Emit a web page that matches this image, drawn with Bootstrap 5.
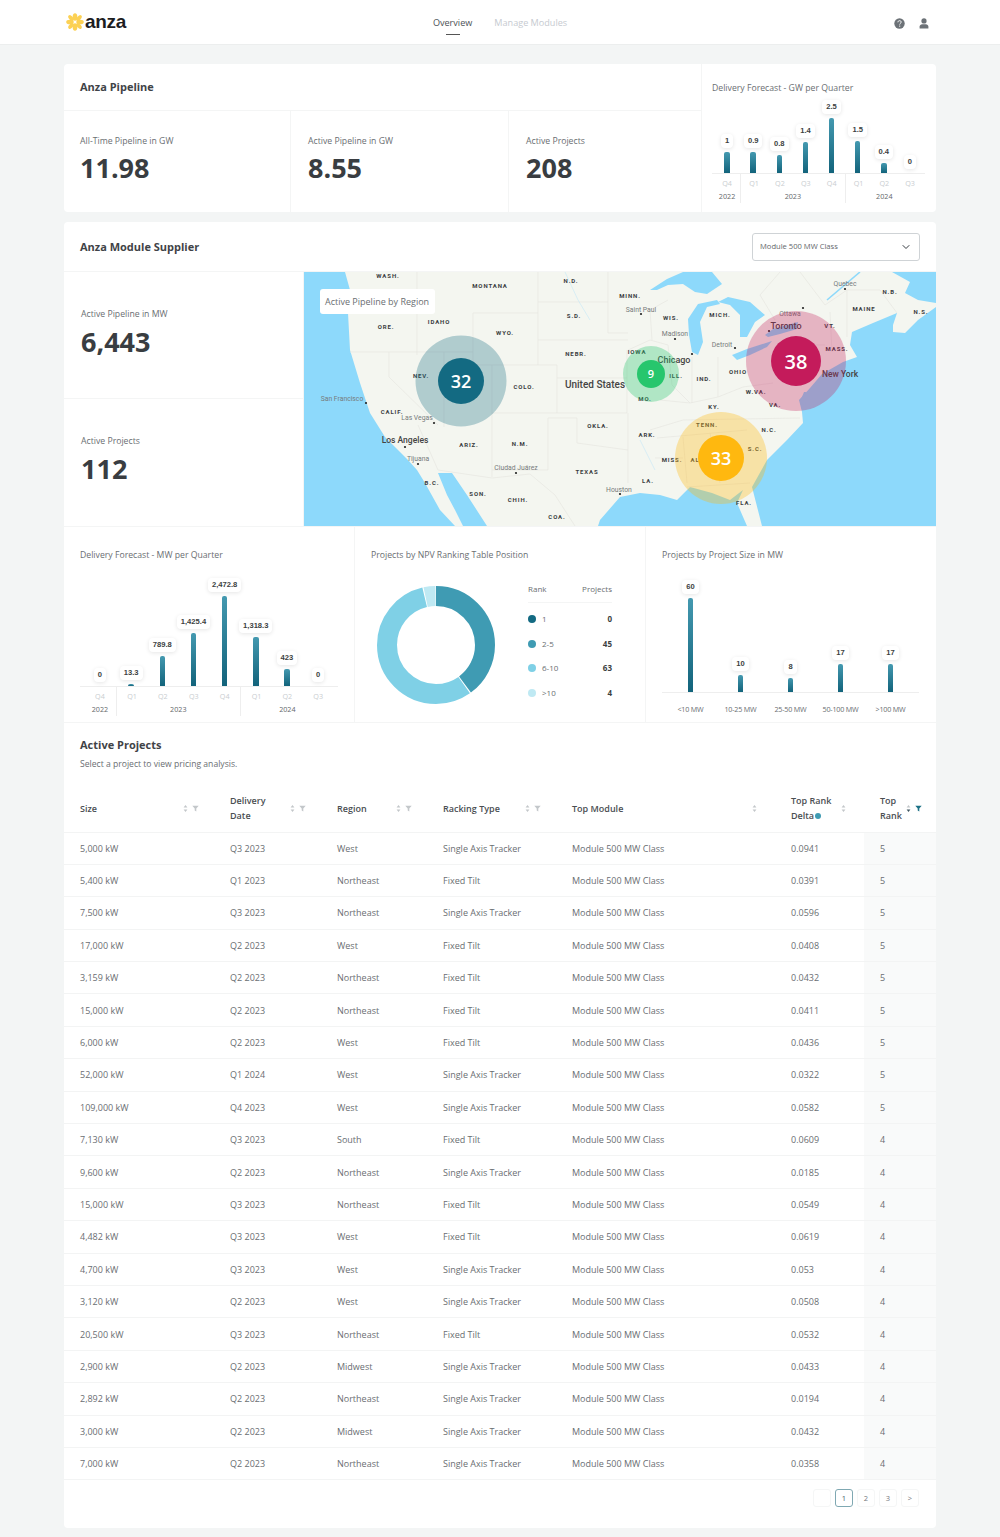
<!DOCTYPE html>
<html lang="en"><head><meta charset="utf-8"><title>Anza</title>
<link href="https://cdn.jsdelivr.net/npm/bootstrap@5.3.0/dist/css/bootstrap.min.css" rel="stylesheet">
<style>
body{background:#f3f5f5;font-family:"Open Sans",sans-serif;font-size:9px;color:#6a6e72;line-height:14px}
.top-bar{height:45px;background:#fff;border-bottom:1px solid #eceeee;padding:2px 64px 0}
.top-side{flex:1 1 0}
.logo-word{font-family:"Liberation Sans",sans-serif;font-weight:700;font-size:19px;color:#1d1d1f;letter-spacing:-.3px;line-height:20px}
.logo-mark{margin:0 1px 0 2px}
.tab-row{gap:22px}
.tab-active,.tab-muted{font-size:9.1px;text-decoration:none;position:relative}
.tab-active{color:#4c5257}.tab-muted{color:#c6cad0}
.tab-active::after{content:"";position:absolute;left:13px;width:14px;bottom:-5px;height:1.5px;background:#555}
.top-icons{gap:14px;margin-right:7px}
.page-wrap{padding:19px 64px 10px}
.panel{background:#fff;border-radius:4px;overflow:hidden;border:0}
.panel+.panel{margin-top:10px}
.h-title{font-size:11px;font-weight:700;color:#3f4347;line-height:14px}
.pipe-left{width:637px}
.pipe-head{height:47px;padding:16px 16px 0;border-bottom:1px solid #f4f5f5}
.stat-cell{padding:23px 16px 0;height:101px;border-right:1px solid #f4f5f5;font-size:8.7px}
.stat-a{width:227px}.stat-b{width:218px}.stat-c{width:192px}
.stat-b,.stat-c{padding-left:17px}
.stat-val{font-size:27px;font-weight:700;color:#393d41;line-height:34px;margin-top:3px}
.pipe-right{width:235px;border-left:1px solid #f4f5f5;padding:17px 11px 0 10px}
.chart-name{font-size:8.7px;color:#6a6e72;line-height:14px}
.plot{display:flex;align-items:flex-end;border-bottom:1px solid #eeeeee;padding:0 2px}
.plot-wide{padding:0 4.4px}
.plot-five{padding:0 3.5px}
.plot-col{flex:1 1 0;display:flex;flex-direction:column;align-items:center;justify-content:flex-end;min-width:0}
.val-pill{font-family:"Liberation Sans",sans-serif;font-weight:700;font-size:7.6px;line-height:14px;height:14px;padding:0 4px;color:#3c3f42;background:#fff;border-radius:4px;box-shadow:0 1px 4px rgba(0,0,0,.1);margin-bottom:4.5px;white-space:nowrap}
.val-bar{width:5.5px;border-radius:2px 2px 0 0;background:linear-gradient(#4499b0,#12637b)}
.axis{display:flex;padding:0 2px}
.axis-wide{padding:0 4.4px}
.yr-group{border-left:1px solid #eeeeee;text-align:center;padding-top:3px}
.yr-group:first-child{border-left:0}
.yr-1{width:12.5%}.yr-4{width:50%}.yr-3{width:37.5%}
.q-row{display:flex;color:#c9cdd0;font-size:7.2px;line-height:13px}
.q-row span{flex:1 1 0}
.yr-lbl{font-size:7.2px;line-height:13px;color:#63676b}
.sup-head{height:50px;padding:0 16px;border-bottom:1px solid #f4f5f5}
.mod-select{width:168px;height:28px;font-size:7.6px;padding:0 7px;color:#63676b;border:1px solid #cfd3d6;border-radius:3px;background-position:right 8px center;background-size:10px 8px}
.sup-left{width:240px;border-right:1px solid #f4f5f5}
.sup-stat{height:127px;padding:35px 17px 0;border-bottom:1px solid #f4f5f5;font-size:8.7px}
.sup-stat:last-child{border-bottom:0}
.sup-stat .stat-val{margin-top:4px}
.map-box{position:relative;width:632px;height:254px;overflow:hidden}
.map-box svg{display:block}
.map-tag{position:absolute;left:16px;top:17px;width:115px;height:25px;background:#fff;border-radius:3px;font-size:9px;line-height:25px;padding-left:5px;color:#6a6e72}
.lb{font-family:Roboto,sans-serif;font-weight:700;font-size:6px;letter-spacing:.9px;fill:#3a3d3f;text-anchor:middle}
.ct{font-family:Roboto,sans-serif;font-size:6.8px;fill:#777b7c;text-anchor:middle}
.cb{font-family:Roboto,sans-serif;font-size:9px;font-weight:500;fill:#444;text-anchor:middle}
.nm{font-family:"Open Sans",sans-serif;font-weight:600;fill:#fff;text-anchor:middle}
.ln{fill:none;stroke:#e6e7e1;stroke-width:.7}
.tri-row{height:197px;border-top:1px solid #f4f5f5;border-bottom:1px solid #f4f5f5}
.tri-a{width:291px;padding:21px 16px 0;border-right:1px solid #f4f5f5}
.tri-b{width:291px;padding:21px 17px 0 16px;border-right:1px solid #f4f5f5}
.tri-c{width:290px;padding:21px 17px 0 16px}
.donut-box{margin:24px 0 0 6px;width:118px;height:118px}
.legend-box{width:84px;margin:20px 0 0 33px}
.legend-head{display:flex;justify-content:space-between;font-size:8px;height:21px;line-height:14px;border-bottom:1px solid #f4f5f5;color:#6a6e72}
.legend-row{display:flex;align-items:center;height:24.6px;font-size:8px}
.legend-row:nth-child(2){margin-top:4px}
.legend-dot{width:8px;height:8px;border-radius:50%;margin-right:6px}
.legend-row b{margin-left:auto;color:#3c3f42;font-weight:700}
.size-axis{display:flex;padding:0 3.5px;font-size:7.2px;color:#6a6e72;margin-top:9px;text-align:center;letter-spacing:-.2px}
.size-axis span{flex:1 1 0}
.tbl-head{padding:15px 16px 0;height:62px}
.tbl-sub{margin-top:5px;font-size:8.6px}
.table.proj{table-layout:fixed;width:872px;margin:0;--bs-table-color:#6a6e72;--bs-table-border-color:#f3f4f4;--bs-table-bg:transparent;font-size:9px;line-height:15px}
.proj th{height:47px;padding:0 15px 0 16px;vertical-align:middle;font-weight:600;color:#4a4e52}
.proj td{height:32.4px;padding:0 0 0 16px;vertical-align:middle;color:#6a6e72}
.proj td:last-child,.proj th:last-child{background:#f9fafa}
.proj thead th:last-child{background:#fff;padding-right:14px}
.th-in{display:flex;align-items:center}
.th-in>span:first-child{margin-right:auto}
.th-sort{padding-right:3px}
.ico{display:block;margin-left:4px;flex:none}
.info-dot{display:inline-block;width:6px;height:6px;border-radius:50%;background:#3f9bb3;margin-left:1px;vertical-align:0}
.pg-wrap{padding:9px 17px 21px 0}
.pg-wrap .pagination{margin:0;gap:4px;--bs-pagination-font-size:7.5px;--bs-pagination-border-color:#f5f6f6;--bs-pagination-color:#73777b;--bs-pagination-border-radius:3px}
.pg-wrap .page-link{width:18px;height:18px;padding:0;line-height:16px;text-align:center;border-radius:3px!important;margin:0!important;background:#fff}
.pg-wrap .page-item.active .page-link{border-color:#7fa8b2;color:#476069;background:#fff}
</style></head><body>
<svg width="0" height="0" class="position-absolute"><defs>
<symbol id="srt" viewBox="0 0 5 9"><path d="M2.5 1 4.4 3.6H.6zM2.5 8 .6 5.4h3.8z" fill="#c3c7ca"/></symbol>
<symbol id="srt-on" viewBox="0 0 5 9"><path d="M2.5 1 4.4 3.6H.6z" fill="#c3c7ca"/><path d="M2.5 8 .6 5.4h3.8z" fill="#3f5560"/></symbol>
<symbol id="flt" viewBox="0 0 7 7"><path d="M.3.8h6.4L4.3 3.6v2.8L2.7 5.5V3.6z" fill="#c3c7ca"/></symbol>
<symbol id="flt-on" viewBox="0 0 7 7"><path d="M.3.8h6.4L4.3 3.6v2.8L2.7 5.5V3.6z" fill="#1c7186"/></symbol>
</defs></svg>

<nav class="top-bar d-flex align-items-center">
  <div class="top-side">
    <a href="#" class="d-inline-flex align-items-center text-decoration-none">
      <svg class="logo-mark" width="18" height="18" viewBox="-10 -10 20 20"><g fill="#fcd154">
        <ellipse cx="0" cy="-5.6" rx="2.6" ry="4.2"/><ellipse cx="0" cy="5.6" rx="2.6" ry="4.2"/>
        <ellipse cx="-5.6" cy="0" rx="4.2" ry="2.6"/><ellipse cx="5.6" cy="0" rx="4.2" ry="2.6"/>
        <ellipse cx="-4.4" cy="-4.4" rx="3.8" ry="2.2" transform="rotate(45 -4.4 -4.4)"/>
        <ellipse cx="4.4" cy="4.4" rx="3.8" ry="2.2" transform="rotate(45 4.4 4.4)"/>
        <ellipse cx="4.4" cy="-4.4" rx="3.8" ry="2.2" transform="rotate(-45 4.4 -4.4)"/>
        <ellipse cx="-4.4" cy="4.4" rx="3.8" ry="2.2" transform="rotate(-45 -4.4 4.4)"/>
      </g></svg>
      <span class="logo-word">anza</span>
    </a>
  </div>
  <div class="d-flex tab-row">
    <a href="#" class="tab-active">Overview</a><a href="#" class="tab-muted">Manage Modules</a>
  </div>
  <div class="top-side d-flex justify-content-end">
    <div class="d-flex align-items-center top-icons">
      <svg width="11" height="11" viewBox="0 0 11 11"><circle cx="5.5" cy="5.5" r="5.2" fill="#6c7277"/><path d="M3.9 4.3c0-1 .7-1.6 1.7-1.6s1.6.6 1.6 1.4c0 1.2-1.5 1.2-1.5 2.4" fill="none" stroke="#fff" stroke-width="1"/><circle cx="5.7" cy="8.1" r=".65" fill="#fff"/></svg>
      <svg width="10" height="11" viewBox="0 0 10 11"><circle cx="5" cy="2.9" r="2.6" fill="#6c7277"/><path d="M.6 10.4V8.6c0-1.5 1.2-2.4 2.6-2.4h3.6c1.4 0 2.6.9 2.6 2.4v1.8z" fill="#6c7277"/></svg>
    </div>
  </div>
</nav>

<main class="page-wrap">
  <section class="panel d-flex">
    <div class="pipe-left">
      <div class="pipe-head h-title">Anza Pipeline</div>
      <div class="d-flex">
        <div class="stat-cell stat-a">All-Time Pipeline in GW<div class="stat-val">11.98</div></div>
        <div class="stat-cell stat-b">Active Pipeline in GW<div class="stat-val">8.55</div></div>
        <div class="stat-cell stat-c border-0">Active Projects<div class="stat-val">208</div></div>
      </div>
    </div>
    <div class="pipe-right">
      <div class="chart-name">Delivery Forecast - GW per Quarter</div>
      <div class="plot" style="height:79px">
        <div class="plot-col"><div class="val-pill">1</div><div class="val-bar" style="height:21px"></div></div>
        <div class="plot-col"><div class="val-pill">0.9</div><div class="val-bar" style="height:21px"></div></div>
        <div class="plot-col"><div class="val-pill">0.8</div><div class="val-bar" style="height:18px"></div></div>
        <div class="plot-col"><div class="val-pill">1.4</div><div class="val-bar" style="height:31px"></div></div>
        <div class="plot-col"><div class="val-pill">2.5</div><div class="val-bar" style="height:55px"></div></div>
        <div class="plot-col"><div class="val-pill">1.5</div><div class="val-bar" style="height:32px"></div></div>
        <div class="plot-col"><div class="val-pill">0.4</div><div class="val-bar" style="height:10px"></div></div>
        <div class="plot-col"><div class="val-pill">0</div><div class="val-bar" style="height:0"></div></div>
      </div>
      <div class="axis">
        <div class="yr-group yr-1"><div class="q-row"><span>Q4</span></div><div class="yr-lbl">2022</div></div>
        <div class="yr-group yr-4"><div class="q-row"><span>Q1</span><span>Q2</span><span>Q3</span><span>Q4</span></div><div class="yr-lbl">2023</div></div>
        <div class="yr-group yr-3"><div class="q-row"><span>Q1</span><span>Q2</span><span>Q3</span></div><div class="yr-lbl">2024</div></div>
      </div>
    </div>
  </section>

  <section class="panel">
    <div class="sup-head d-flex align-items-center justify-content-between">
      <div class="h-title">Anza Module Supplier</div>
      <select class="form-select mod-select"><option>Module 500 MW Class</option></select>
    </div>
    <div class="d-flex">
      <div class="sup-left">
        <div class="sup-stat">Active Pipeline in MW<div class="stat-val">6,443</div></div>
        <div class="sup-stat">Active Projects<div class="stat-val">112</div></div>
      </div>
      <div class="map-box">
        <svg width="633" height="254" viewBox="304 272 633 254">
          <rect x="304" y="272" width="633" height="254" fill="#8dd9fb"/>
          <path fill="#f4f6f0" d="M345 272L892 272 910 282 905 293 918 300 936 303 936 307 918 320 905 333 893 332 893 325 897 313 873 323 852 332 850 345 857 357 843 362 822 374 810 388 799 400 802 412 803 423 787 440 767 460 752 487 762 526 747 526 737 503 743 490 730 500 712 493 690 487 677 500 660 495 640 493 620 497 600 520 598 526 455 526 440 510 425 483 417 470 408 460 385 437 370 413 360 383 350 350 348 313 350 290Z"/>
          <g class="ln-g">
            <path class="ln" d="M417 272V355M350 352H473M389 352V377L438 425M444 352V427M492 365V477M473 313H538V365M473 313V365H557M557 365V413M492 413H627M548 418V470H492M538 272V313M538 302H608M538 340H628M608 272V333M557 378H627M627 350V413M548 418H577V443L628 450M628 413V483M692 357V403M718 357V397M660 400 690 403 718 397 743 387 773 383M650 430 683 420 800 418M657 438 747 430M683 437 687 483M710 433 720 483M687 487 750 483M655 458H683M847 337V290H880L897 313M776 370H820M790 345H825M830 312 832 352M418 425 438 470 492 478 530 474 555 495 575 526M628 350 650 340 668 345 672 385 690 403M608 333H628M668 300 650 310 652 340M780 272 760 295 775 320M800 272 825 305 847 290"/>
            <path d="M827 300 860 272" fill="none" stroke="#8dd9fb" stroke-width="1.6"/>
            <path d="M565 272 578 300 590 320M640 440 655 470" fill="none" stroke="#c5e8f6" stroke-width=".6"/>
          </g>
          <g fill="#8dd9fb">
            <path d="M438 473 452 473 467 495 487 526 463 526 455 510 447 495Z"/>
            <path d="M650 290 667 279 683 272 712 272 722 284 707 294 695 292 683 284 668 285 657 290Z"/>
            <path d="M688 319 698 304 717 300 720 304 707 307 700 322 703 342 698 355 692 352 689 335Z"/>
            <path d="M718 302 728 297 750 302 765 315 755 322 747 337 740 337 740 315 730 305Z"/>
            <path d="M732 355 747 349 772 341 767 347 750 355 737 360Z"/>
            <path d="M765 335 773 329 798 322 797 329 780 334 768 337Z"/>
            <path d="M800 402 804 392 806 392 805 405Z"/>
          </g>
          <g fill="#222">
            <circle cx="366" cy="403" r="1.1"/><circle cx="434" cy="423" r="1.1"/><circle cx="405" cy="447" r="1.1"/><circle cx="418" cy="464" r="1.1"/><circle cx="516" cy="473" r="1.1"/><circle cx="620" cy="494" r="1.1"/><circle cx="641" cy="314" r="1.1"/><circle cx="675" cy="339" r="1.1"/><circle cx="692" cy="354" r="1.1"/><circle cx="735" cy="348" r="1.1"/><circle cx="769" cy="331" r="1.1"/><circle cx="803" cy="308" r="1.1"/><circle cx="845" cy="289" r="1.1"/>
          </g>
          <g>
            <text class="lb" x="388" y="277.5">WASH.</text><text class="lb" x="490" y="288">MONTANA</text><text class="lb" x="571" y="283">N.D.</text><text class="lb" x="630" y="298">MINN.</text><text class="ct" x="641" y="312">Saint Paul</text><text class="lb" x="574" y="318">S.D.</text><text class="lb" x="671" y="320">WIS.</text><text class="lb" x="720" y="317">MICH.</text><text class="ct" x="790" y="316">Ottawa</text><text class="ct" x="845" y="286">Quebec</text><text class="lb" x="890" y="294">N.B.</text><text class="lb" x="864" y="311">MAINE</text><text class="lb" x="921" y="314">N.S.</text><text class="lb" x="830" y="328">VT.</text><text class="cb" x="786" y="329">Toronto</text><text class="lb" x="439" y="324">IDAHO</text><text class="lb" x="386" y="329">ORE.</text><text class="lb" x="505" y="335">WYO.</text><text class="ct" x="675" y="336">Madison</text><text class="ct" x="722" y="347">Detroit</text><text class="lb" x="837" y="351">MASS.</text><text class="lb" x="637" y="354">IOWA</text><text class="lb" x="576" y="356">NEBR.</text><text class="cb" x="674" y="363">Chicago</text><text class="lb" x="676" y="378">ILL.</text><text class="lb" x="738" y="374">OHIO</text><text class="lb" x="704" y="381">IND.</text><text class="lb" x="421" y="378">NEV.</text><text class="lb" x="524" y="389">COLO.</text><text class="cb" x="595" y="388" style="font-size:10px">United States</text><text class="cb" x="840" y="377" style="font-size:8.5px">New York</text><text class="lb" x="756" y="394">W.VA.</text><text class="lb" x="775" y="407">VA.</text><text class="lb" x="645" y="401">MO.</text><text class="lb" x="714" y="409">KY.</text><text class="ct" x="342" y="401">San Francisco</text><text class="lb" x="392" y="414">CALIF.</text><text class="ct" x="417" y="420">Las Vegas</text><text class="lb" x="598" y="428">OKLA.</text><text class="lb" x="707" y="427">TENN.</text><text class="lb" x="769" y="432">N.C.</text><text class="lb" x="647" y="437">ARK.</text><text class="cb" x="405" y="443" style="font-size:8.5px">Los Angeles</text><text class="lb" x="469" y="447">ARIZ.</text><text class="lb" x="520" y="446">N.M.</text><text class="lb" x="755" y="451">S.C.</text><text class="lb" x="672" y="462">MISS.</text><text class="lb" x="695" y="462">AL</text><text class="ct" x="418" y="461">Tijuana</text><text class="ct" x="516" y="470">Ciudad Juárez</text><text class="lb" x="587" y="474">TEXAS</text><text class="lb" x="648" y="483">LA.</text><text class="ct" x="619" y="492">Houston</text><text class="lb" x="432" y="485">B.C.</text><text class="lb" x="478" y="496">SON.</text><text class="lb" x="518" y="502">CHIH.</text><text class="lb" x="744" y="505">FLA.</text><text class="lb" x="557" y="519">COA.</text>
          </g>
          <circle cx="461" cy="381" r="45.5" fill="#136a82" fill-opacity=".3"/><circle cx="461" cy="381" r="23" fill="#136a82"/>
          <text class="nm" x="461" y="388" font-size="18">32</text>
          <circle cx="651" cy="374" r="28" fill="#27c66d" fill-opacity=".33"/><circle cx="651" cy="374" r="14" fill="#27c66d"/>
          <text class="nm" x="651" y="378" font-size="11">9</text>
          <circle cx="796" cy="361" r="50" fill="#c41b5b" fill-opacity=".3"/><circle cx="796" cy="361" r="25" fill="#c41b5b"/>
          <text class="nm" x="796" y="369" font-size="20">38</text>
          <circle cx="721" cy="458" r="46" fill="#ffb80f" fill-opacity=".33"/><circle cx="721" cy="458" r="23" fill="#ffb80f"/>
          <text class="nm" x="721" y="465" font-size="18">33</text>
        </svg>
        <div class="map-tag">Active Pipeline by Region</div>
      </div>
    </div>

    <div class="tri-row d-flex">
      <div class="tri-a">
        <div class="chart-name">Delivery Forecast - MW per Quarter</div>
        <div class="plot plot-wide" style="height:125px">
          <div class="plot-col"><div class="val-pill">0</div><div class="val-bar" style="height:0"></div></div>
          <div class="plot-col"><div class="val-pill">13.3</div><div class="val-bar" style="height:2px"></div></div>
          <div class="plot-col"><div class="val-pill">789.8</div><div class="val-bar" style="height:30px"></div></div>
          <div class="plot-col"><div class="val-pill">1,425.4</div><div class="val-bar" style="height:53px"></div></div>
          <div class="plot-col"><div class="val-pill">2,472.8</div><div class="val-bar" style="height:90px"></div></div>
          <div class="plot-col"><div class="val-pill">1,318.3</div><div class="val-bar" style="height:49px"></div></div>
          <div class="plot-col"><div class="val-pill">423</div><div class="val-bar" style="height:17px"></div></div>
          <div class="plot-col"><div class="val-pill">0</div><div class="val-bar" style="height:0"></div></div>
        </div>
        <div class="axis axis-wide">
          <div class="yr-group yr-1"><div class="q-row"><span>Q4</span></div><div class="yr-lbl">2022</div></div>
          <div class="yr-group yr-4"><div class="q-row"><span>Q1</span><span>Q2</span><span>Q3</span><span>Q4</span></div><div class="yr-lbl">2023</div></div>
          <div class="yr-group yr-3"><div class="q-row"><span>Q1</span><span>Q2</span><span>Q3</span></div><div class="yr-lbl">2024</div></div>
        </div>
      </div>
      <div class="tri-b">
        <div class="chart-name">Projects by NPV Ranking Table Position</div>
        <div class="d-flex">
          <div class="donut-box">
            <svg width="118" height="118" viewBox="0 0 118 118">
              <g transform="rotate(-90 59 59)" fill="none" stroke-width="20">
                <circle cx="59" cy="59" r="49" stroke="#3f9bb3" stroke-dasharray="122.7 185.2"/>
                <circle cx="59" cy="59" r="49" stroke="#7fd0e6" stroke-dasharray="172.2 135.7" stroke-dashoffset="-123.7"/>
                <circle cx="59" cy="59" r="49" stroke="#bfe9f3" stroke-dasharray="10 297.9" stroke-dashoffset="-296.9"/>
              </g>
            </svg>
          </div>
          <div class="legend-box">
            <div class="legend-head"><span>Rank</span><span>Projects</span></div>
            <div class="legend-row"><span class="legend-dot" style="background:#136a82"></span>1<b>0</b></div>
            <div class="legend-row"><span class="legend-dot" style="background:#3f9bb3"></span>2-5<b>45</b></div>
            <div class="legend-row"><span class="legend-dot" style="background:#7fd0e6"></span>6-10<b>63</b></div>
            <div class="legend-row"><span class="legend-dot" style="background:#bfe9f3"></span>&gt;10<b>4</b></div>
          </div>
        </div>
      </div>
      <div class="tri-c">
        <div class="chart-name">Projects by Project Size in MW</div>
        <div class="plot plot-five" style="height:131px">
          <div class="plot-col"><div class="val-pill">60</div><div class="val-bar" style="height:94px"></div></div>
          <div class="plot-col"><div class="val-pill">10</div><div class="val-bar" style="height:17px"></div></div>
          <div class="plot-col"><div class="val-pill">8</div><div class="val-bar" style="height:14px"></div></div>
          <div class="plot-col"><div class="val-pill">17</div><div class="val-bar" style="height:28px"></div></div>
          <div class="plot-col"><div class="val-pill">17</div><div class="val-bar" style="height:28px"></div></div>
        </div>
        <div class="size-axis"><span>&lt;10 MW</span><span>10-25 MW</span><span>25-50 MW</span><span>50-100 MW</span><span>&gt;100 MW</span></div>
      </div>
    </div>

    <div class="tbl-head">
      <div class="h-title">Active Projects</div>
      <div class="tbl-sub">Select a project to view pricing analysis.</div>
    </div>
    <table class="table proj">
      <colgroup><col style="width:150px"><col style="width:107px"><col style="width:106px"><col style="width:129px"><col style="width:219px"><col style="width:89px"><col style="width:72px"></colgroup>
      <thead><tr>
        <th><div class="th-in"><span>Size</span><svg class="ico" width="5" height="9"><use href="#srt"/></svg><svg class="ico" width="7" height="7"><use href="#flt"/></svg></div></th>
        <th><div class="th-in"><span>Delivery<br>Date</span><svg class="ico" width="5" height="9"><use href="#srt"/></svg><svg class="ico" width="7" height="7"><use href="#flt"/></svg></div></th>
        <th><div class="th-in"><span>Region</span><svg class="ico" width="5" height="9"><use href="#srt"/></svg><svg class="ico" width="7" height="7"><use href="#flt"/></svg></div></th>
        <th><div class="th-in"><span>Racking Type</span><svg class="ico" width="5" height="9"><use href="#srt"/></svg><svg class="ico" width="7" height="7"><use href="#flt"/></svg></div></th>
        <th><div class="th-in th-sort"><span>Top Module</span><svg class="ico" width="5" height="9"><use href="#srt"/></svg></div></th>
        <th><div class="th-in th-sort"><span>Top Rank<br>Delta<i class="info-dot"></i></span><svg class="ico" width="5" height="9"><use href="#srt"/></svg></div></th>
        <th><div class="th-in"><span>Top<br>Rank</span><svg class="ico" width="5" height="9"><use href="#srt-on"/></svg><svg class="ico" width="7" height="7"><use href="#flt-on"/></svg></div></th>
      </tr></thead>
      <tbody>
        <tr><td>5,000 kW</td><td>Q3 2023</td><td>West</td><td>Single Axis Tracker</td><td>Module 500 MW Class</td><td>0.0941</td><td>5</td></tr>
        <tr><td>5,400 kW</td><td>Q1 2023</td><td>Northeast</td><td>Fixed Tilt</td><td>Module 500 MW Class</td><td>0.0391</td><td>5</td></tr>
        <tr><td>7,500 kW</td><td>Q3 2023</td><td>Northeast</td><td>Single Axis Tracker</td><td>Module 500 MW Class</td><td>0.0596</td><td>5</td></tr>
        <tr><td>17,000 kW</td><td>Q2 2023</td><td>West</td><td>Fixed Tilt</td><td>Module 500 MW Class</td><td>0.0408</td><td>5</td></tr>
        <tr><td>3,159 kW</td><td>Q2 2023</td><td>Northeast</td><td>Fixed Tilt</td><td>Module 500 MW Class</td><td>0.0432</td><td>5</td></tr>
        <tr><td>15,000 kW</td><td>Q2 2023</td><td>Northeast</td><td>Fixed Tilt</td><td>Module 500 MW Class</td><td>0.0411</td><td>5</td></tr>
        <tr><td>6,000 kW</td><td>Q2 2023</td><td>West</td><td>Fixed Tilt</td><td>Module 500 MW Class</td><td>0.0436</td><td>5</td></tr>
        <tr><td>52,000 kW</td><td>Q1 2024</td><td>West</td><td>Single Axis Tracker</td><td>Module 500 MW Class</td><td>0.0322</td><td>5</td></tr>
        <tr><td>109,000 kW</td><td>Q4 2023</td><td>West</td><td>Single Axis Tracker</td><td>Module 500 MW Class</td><td>0.0582</td><td>5</td></tr>
        <tr><td>7,130 kW</td><td>Q3 2023</td><td>South</td><td>Fixed Tilt</td><td>Module 500 MW Class</td><td>0.0609</td><td>4</td></tr>
        <tr><td>9,600 kW</td><td>Q2 2023</td><td>Northeast</td><td>Single Axis Tracker</td><td>Module 500 MW Class</td><td>0.0185</td><td>4</td></tr>
        <tr><td>15,000 kW</td><td>Q3 2023</td><td>Northeast</td><td>Fixed Tilt</td><td>Module 500 MW Class</td><td>0.0549</td><td>4</td></tr>
        <tr><td>4,482 kW</td><td>Q3 2023</td><td>West</td><td>Fixed Tilt</td><td>Module 500 MW Class</td><td>0.0619</td><td>4</td></tr>
        <tr><td>4,700 kW</td><td>Q3 2023</td><td>West</td><td>Single Axis Tracker</td><td>Module 500 MW Class</td><td>0.053</td><td>4</td></tr>
        <tr><td>3,120 kW</td><td>Q2 2023</td><td>West</td><td>Single Axis Tracker</td><td>Module 500 MW Class</td><td>0.0508</td><td>4</td></tr>
        <tr><td>20,500 kW</td><td>Q3 2023</td><td>Northeast</td><td>Fixed Tilt</td><td>Module 500 MW Class</td><td>0.0532</td><td>4</td></tr>
        <tr><td>2,900 kW</td><td>Q2 2023</td><td>Midwest</td><td>Single Axis Tracker</td><td>Module 500 MW Class</td><td>0.0433</td><td>4</td></tr>
        <tr><td>2,892 kW</td><td>Q2 2023</td><td>Northeast</td><td>Single Axis Tracker</td><td>Module 500 MW Class</td><td>0.0194</td><td>4</td></tr>
        <tr><td>3,000 kW</td><td>Q2 2023</td><td>Midwest</td><td>Single Axis Tracker</td><td>Module 500 MW Class</td><td>0.0432</td><td>4</td></tr>
        <tr><td>7,000 kW</td><td>Q2 2023</td><td>Northeast</td><td>Single Axis Tracker</td><td>Module 500 MW Class</td><td>0.0358</td><td>4</td></tr>
      </tbody>
    </table>
    <div class="pg-wrap d-flex justify-content-end">
      <ul class="pagination">
        <li class="page-item"><a class="page-link" href="#">&nbsp;</a></li>
        <li class="page-item active"><a class="page-link" href="#">1</a></li>
        <li class="page-item"><a class="page-link" href="#">2</a></li>
        <li class="page-item"><a class="page-link" href="#">3</a></li>
        <li class="page-item"><a class="page-link" href="#">&gt;</a></li>
      </ul>
    </div>
  </section>
</main>
<script src="https://cdn.jsdelivr.net/npm/bootstrap@5.3.0/dist/js/bootstrap.bundle.min.js"></script>
</body></html>
